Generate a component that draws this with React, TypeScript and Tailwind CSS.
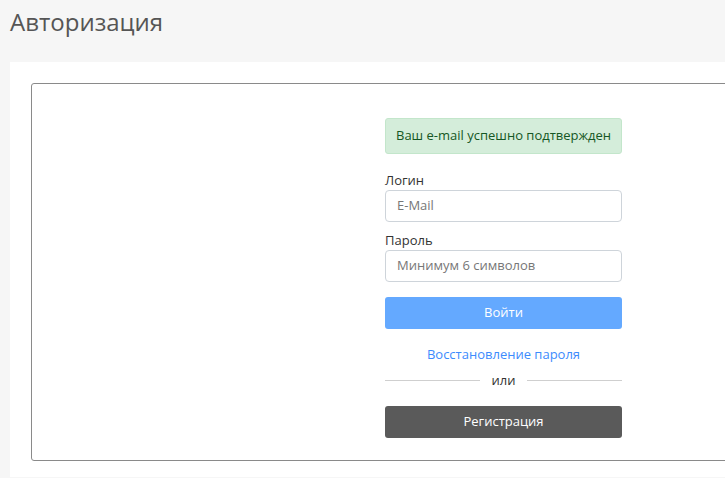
import React from "react";

export default function App() {
  return (
    <div
      className="min-h-[478px] w-[725px] overflow-hidden bg-[#f6f6f6]"
      style={{ fontFamily: '"Open Sans", "Noto Sans", sans-serif' }}
    >
      <h1 className="pl-[10px] pt-[7px] h-[62px] text-[24px] leading-[30px] text-[#555] font-normal">
        Авторизация
      </h1>
      <div className="ml-[10px] bg-white pl-[21px] pt-[21px] pb-[16px]">
        <div className="w-[720px] h-[378px] border border-[#8a8a8a] rounded-[3px] pl-[353px] pt-[34px]">
          <div className="w-[237px] flex flex-col text-[14px]">
            <div className="h-[36px] rounded-[3px] border border-[#c3e6cb] bg-[#d4edda] text-[#155724] flex items-center px-[10px] text-[13px] whitespace-nowrap">
              Ваш e-mail успешно подтвержден
            </div>
            <label className="mt-[16px] text-[13px] leading-[20px] text-[#333]">Логин</label>
            <div className="h-[32px] rounded-[4px] border border-[#ced4da] flex items-center px-[11px] text-[13px] text-[#777]">
              E-Mail
            </div>
            <label className="mt-[8px] text-[13px] leading-[20px] text-[#333]">Пароль</label>
            <div className="h-[32px] rounded-[4px] border border-[#ced4da] flex items-center px-[11px] text-[13px] text-[#777]">
              Минимум 6 символов
            </div>
            <button className="mt-[15px] h-[32px] rounded-[3px] bg-[#64a9ff] text-white text-[13px]">
              Войти
            </button>
            <a className="mt-[16px] text-center text-[13px] leading-[18px] text-[#3d8bfd]">
              Восстановление пароля
            </a>
            <div className="mt-[8px] flex items-center text-[13px] text-[#333] leading-[18px]">
              <div className="flex-1 h-px bg-[#cfcfcf]" />
              <span className="px-[12px]">или</span>
              <div className="flex-1 h-px bg-[#cfcfcf]" />
            </div>
            <button className="mt-[17px] h-[32px] rounded-[3px] bg-[#5a5a5a] text-white text-[13px]">
              Регистрация
            </button>
          </div>
        </div>
      </div>
    </div>
  );
}
